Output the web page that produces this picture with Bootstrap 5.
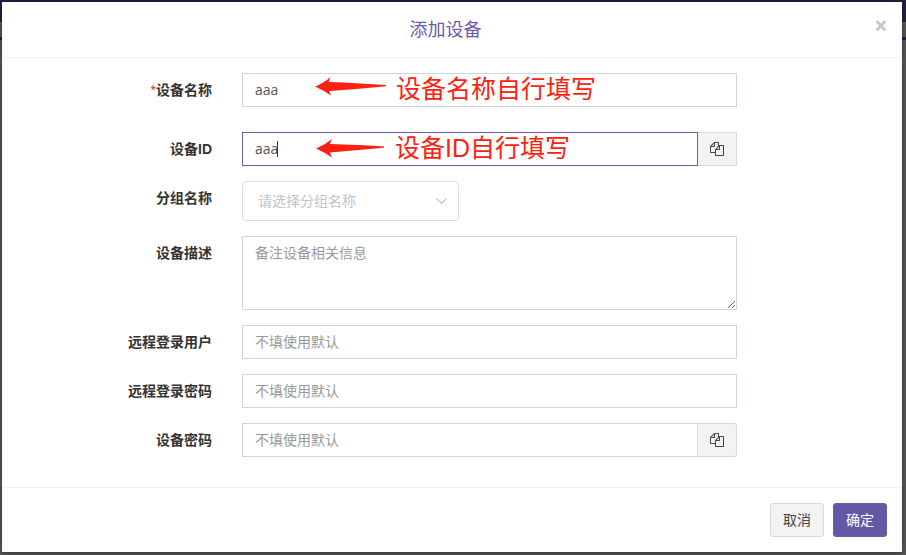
<!DOCTYPE html>
<html lang="zh-CN">
<head>
<meta charset="utf-8">
<meta name="viewport" content="width=device-width, initial-scale=1">
<title>添加设备</title>
<link rel="stylesheet" href="https://cdn.jsdelivr.net/npm/bootstrap@5.3.0/dist/css/bootstrap.min.css">
<style>
  body {
    min-height: 100vh;
    font-family: "Open Sans", "Noto Sans CJK SC", sans-serif;
    font-size: 14px;
    line-height: 20px;
    color: #333;
    background: linear-gradient(#251e3d 0 22px, #555 22px 37px, #251e3d 37px 40px, #555 40px);
    padding: 2px 4px 3px 2px;
  }
  .dialog-panel { background: #fff; box-shadow: 0 1px 4px rgba(0, 0, 0, .4); }
  .dialog-head { padding: 17px 28px 18px 15px; border-bottom: 1px solid #f1f1f3; }
  .dialog-title { font-size: 18px; line-height: 20px; font-weight: 400; color: #7059a8; }
  .close-btn { top: 16px; right: 13px; width: 16px; height: 16px; line-height: 0; }
  .dialog-form { padding: 15px 0; }
  .field-row { --bs-gutter-x: 30px; margin: 0 0 15px; }
  .field-row-first { margin-bottom: 25px; }
  .field-label { padding-top: 7px; font-family: "Liberation Sans", "Noto Sans CJK SC", sans-serif; font-weight: 600; text-align: right; }
  .required-mark { color: #e02222; font-weight: 400; }
  .field-input {
    padding: 6px 12px;
    font-size: 14px;
    line-height: 20px;
    color: #555;
    border: 1px solid #d0d3e0;
    border-radius: 0;
  }
  .field-input::placeholder { color: #999; }
  .field-input:focus { box-shadow: none; color: #555; border-color: #7059a8; }
  .field-active { border-color: #7059a8; }
  textarea.field-input { height: 74px; resize: vertical; }
  .group-select { width: 217px; max-width: 100%; }
  .group-select select {
    appearance: none;
    height: 40px;
    padding: 0 36px 0 15px;
    font-size: 14px;
    color: #bfc3cf;
    background: #fff;
    border: 1px solid #dadce6;
    border-radius: 4px;
  }
  .group-select svg { right: 12px; top: 15px; pointer-events: none; }
  .copy-btn {
    width: 40px;
    padding: 0;
    line-height: 0;
    color: #444;
    background: #f3f3f3;
    border: 1px solid #dadada;
    border-radius: 0 3px 3px 0;
  }
  .copy-group .field-active { z-index: 3; }
  .text-caret { left: 36px; top: 9px; width: 1px; height: 16px; background: #333; z-index: 6; }
  .note {
    left: 73px;
    top: 0;
    font-family: "Liberation Sans", "Noto Sans CJK SC", sans-serif;
    font-size: 25px;
    line-height: 32px;
    color: #ff2010;
    white-space: nowrap;
    pointer-events: none;
    z-index: 6;
  }
  .dialog-foot { padding: 15px; gap: 9px; border-top: 1px solid #f1f1f3; }
  .action-btn { padding: 6px 12px; font-size: 14px; line-height: 20px; border-radius: 3px; }
  .action-cancel { color: #444; background: #f3f3f3; border-color: #dadada; }
  .action-ok { color: #fff; background: #6159a6; border-color: #7059a8; }
</style>
<script src="https://cdn.jsdelivr.net/npm/bootstrap@5.3.0/dist/js/bootstrap.bundle.min.js"></script>
</head>
<body>
<svg class="d-none" aria-hidden="true">
  <symbol id="copy" viewBox="0 0 1792 1792"><path fill="currentColor" d="M1696 384q40 0 68 28t28 68v1216q0 40-28 68t-68 28h-960q-40 0-68-28t-28-68v-288h-544q-40 0-68-28t-28-68v-672q0-40 20-88t48-76l408-408q28-28 76-48t88-20h416q40 0 68 28t28 68v328q68-40 128-40h416zm-544 213l-299 299h299v-299zm-640-384l-299 299h299v-299zm196 647l316-316v-416h-384v416q0 40-28 68t-68 28h-416v640h512v-256q0-40 20-88t48-76zm956 804v-1152h-384v416q0 40-28 68t-68 28h-416v640h896z"/></symbol>
</svg>
<main class="dialog-panel" role="dialog" aria-labelledby="dialogTitle">
  <header class="dialog-head position-relative text-center">
    <h1 class="dialog-title m-0" id="dialogTitle">添加设备</h1>
    <button type="button" class="close-btn btn p-0 border-0 position-absolute" aria-label="关闭">
      <svg width="16" height="16" viewBox="0 0 16 16"><path d="M4.500 4l7 7.500M11.500 4l-7 7.500" stroke="#c8c8c8" stroke-width="3" stroke-linecap="round"/></svg>
    </button>
  </header>
  <form id="deviceForm" class="dialog-form">
    <div class="row field-row field-row-first">
      <label class="col-3 field-label" for="devName"><span class="required-mark">*</span>设备名称</label>
      <div class="col-7">
        <div class="position-relative">
          <input class="form-control field-input" type="text" id="devName" value="aaa">
          <div class="note position-absolute d-flex">
            <svg class="me-2" width="73" height="32" viewBox="0 0 73 32"><path d="M0 13.500Q9 10 15.500 4Q14 7 14 9L28 9.500Q50 10.500 71 12V13.200Q44 16 14 18Q15 20 16 22.500Q8 17 0 13.500Z" fill="#ff2010"/></svg>
            <span>设备名称自行填写</span>
          </div>
        </div>
      </div>
    </div>
    <div class="row field-row">
      <label class="col-3 field-label" for="devId">设备ID</label>
      <div class="col-7">
        <div class="input-group copy-group">
          <input class="form-control field-input field-active" type="text" id="devId" value="aaa">
          <button type="button" class="btn copy-btn" aria-label="复制设备ID"><svg width="14" height="14"><use href="#copy"/></svg></button>
          <span class="text-caret position-absolute"></span>
          <div class="note position-absolute d-flex">
            <svg class="me-2" width="73" height="32" viewBox="0 0 73 32"><path d="M2 16.500Q11 13 18 7Q16 11 16 12L30 12.500Q50 13 70 14.500V15.700Q44 18 16 20.500Q17 23 18 25.500Q10 20 2 16.500Z" fill="#ff2010"/></svg>
            <span>设备ID自行填写</span>
          </div>
        </div>
      </div>
    </div>
    <div class="row field-row">
      <label class="col-3 field-label" for="devGroup">分组名称</label>
      <div class="col-7">
        <div class="group-select position-relative">
          <select class="w-100 d-block" id="devGroup"><option>请选择分组名称</option></select>
          <svg class="position-absolute" width="11" height="10" viewBox="0 0 11 10"><path d="M.5 2.500l5 5 5-5" fill="none" stroke="#bfc3cf" stroke-width="1.200"/></svg>
        </div>
      </div>
    </div>
    <div class="row field-row">
      <label class="col-3 field-label" for="devDesc">设备描述</label>
      <div class="col-7"><textarea class="form-control field-input" id="devDesc" placeholder="备注设备相关信息"></textarea></div>
    </div>
    <div class="row field-row">
      <label class="col-3 field-label" for="remoteUser">远程登录用户</label>
      <div class="col-7"><input class="form-control field-input" type="text" id="remoteUser" placeholder="不填使用默认"></div>
    </div>
    <div class="row field-row">
      <label class="col-3 field-label" for="remotePass">远程登录密码</label>
      <div class="col-7"><input class="form-control field-input" type="text" id="remotePass" placeholder="不填使用默认"></div>
    </div>
    <div class="row field-row">
      <label class="col-3 field-label" for="devPass">设备密码</label>
      <div class="col-7">
        <div class="input-group copy-group">
          <input class="form-control field-input" type="text" id="devPass" placeholder="不填使用默认">
          <button type="button" class="btn copy-btn" aria-label="复制设备密码"><svg width="14" height="14"><use href="#copy"/></svg></button>
        </div>
      </div>
    </div>
  </form>
  <footer class="dialog-foot d-flex justify-content-end">
    <button type="button" class="btn action-btn action-cancel">取消</button>
    <button type="submit" form="deviceForm" class="btn action-btn action-ok">确定</button>
  </footer>
</main>
</body>
</html>
